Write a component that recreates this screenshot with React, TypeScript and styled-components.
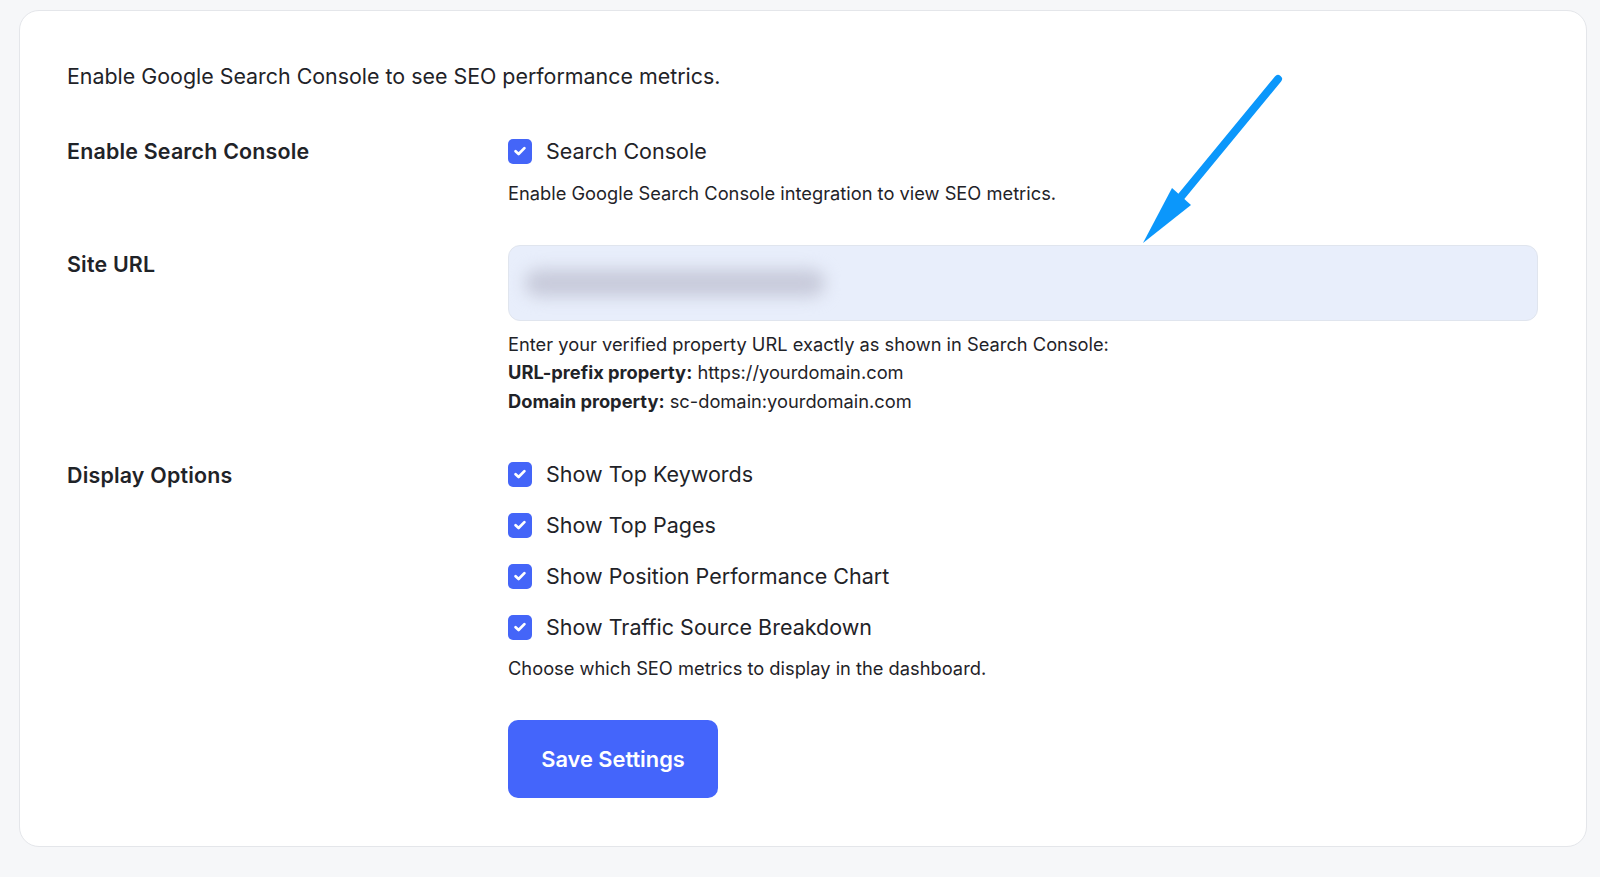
import React from 'react';
import styled, { createGlobalStyle } from 'styled-components';

const GlobalStyle = createGlobalStyle`
    html, body {
        margin: 0;
        padding: 0;
        background: #f6f7f9;
    }
    body {
        font-family: Inter, "Noto Sans", sans-serif;
        color: #1f2328;
    }
`;

const Page = styled.div`
    position: relative;
    padding: 10px 13px 30px 19px;
`;

const Card = styled.form`
    background: #fff;
    border: 1px solid #e4e6ea;
    border-radius: 20px;
    padding: 49px 48px 48px 47px;
`;

const Intro = styled.p`
    margin: 0 0 45px;
    font-size: 21.4px;
    line-height: 32px;
`;

const Table = styled.div`
    display: grid;
    grid-template-columns: 441px 1fr;
`;

const Label = styled.div<{ $offset?: number }>`
    font-size: 21.4px;
    font-weight: 600;
    letter-spacing: 0.2px;
    line-height: 28px;
    padding-top: ${p => p.$offset || 0}px;
`;

const Cell = styled.div<{ $top?: number; $bottom?: number }>`
    display: flex;
    flex-direction: column;
    padding-top: ${p => p.$top || 0}px;
    padding-bottom: ${p => p.$bottom || 0}px;
`;

const CheckList = styled.div`
    display: flex;
    flex-direction: column;
    gap: 23px;
`;

const CheckRow = styled.label`
    display: flex;
    align-items: center;
    gap: 14px;
    font-size: 21.5px;
    line-height: 28px;
`;

const Box = styled.span`
    width: 24px;
    height: 25px;
    border-radius: 5px;
    background: #4465f8;
    display: flex;
    align-items: center;
    justify-content: center;
    flex-shrink: 0;
`;

const Help = styled.p<{ $gap?: number }>`
    margin: ${p => p.$gap || 14}px 0 0;
    font-size: 18.3px;
    line-height: 28.5px;
    b {
        font-weight: 700;
    }
`;

const Field = styled.div`
    height: 76px;
    box-sizing: border-box;
    border: 1px solid #e0e5ee;
    border-radius: 12px;
    background: #e8eefb;
    display: flex;
    align-items: center;
    padding-left: 16px;
    overflow: hidden;
`;

// the stored site address is shown smudged out
const Smudge = styled.span`
    display: block;
    width: 300px;
    height: 28px;
    border-radius: 14px;
    background: #c8cbdb;
    filter: blur(8px);
`;

const SaveButton = styled.button`
    margin-top: 37px;
    align-self: flex-start;
    width: 210px;
    height: 78px;
    border: none;
    border-radius: 10px;
    background: #4465fb;
    color: #fff;
    font-family: Inter, sans-serif;
    font-size: 21.8px;
    font-weight: 600;
    cursor: pointer;
`;

const Pointer = styled.svg`
    position: absolute;
    left: 1130px;
    top: 66px;
    pointer-events: none;
`;

function Check({ children }: { children: React.ReactNode }) {
    return (
        <CheckRow>
            <Box>
                <svg width="12" height="10" viewBox="0 0 12 10">
                    <path d="M1.6 5.2 4.6 8 10.4 2.1" fill="none" stroke="#fff" strokeWidth="2.7" strokeLinecap="round" strokeLinejoin="round" />
                </svg>
            </Box>
            {children}
        </CheckRow>
    );
}

const options = [
    'Show Top Keywords',
    'Show Top Pages',
    'Show Position Performance Chart',
    'Show Traffic Source Breakdown',
];

function App() {
    return (
        <Page>
            <GlobalStyle />
            <Card onSubmit={e => e.preventDefault()}>
                <Intro>Enable Google Search Console to see SEO performance metrics.</Intro>
                <Table>
                    <Label>Enable Search Console</Label>
                    <Cell $bottom={37}>
                        <Check>Search Console</Check>
                        <Help>Enable Google Search Console integration to view SEO metrics.</Help>
                    </Cell>

                    <Label $offset={5}>Site URL</Label>
                    <Cell $bottom={45}>
                        <Field><Smudge /></Field>
                        <Help $gap={9}>
                            Enter your verified property URL exactly as shown in Search Console:<br />
                            <b>URL-prefix property:</b> https://yourdomain.com<br />
                            <b>Domain property:</b> sc-domain:yourdomain.com
                        </Help>
                    </Cell>

                    <Label $offset={1}>Display Options</Label>
                    <Cell>
                        <CheckList>
                            {options.map(o => <Check key={o}>{o}</Check>)}
                        </CheckList>
                        <Help $gap={13}>Choose which SEO metrics to display in the dashboard.</Help>
                        <SaveButton type="submit">Save Settings</SaveButton>
                    </Cell>
                </Table>
            </Card>
            <Pointer width="160" height="190" viewBox="1130 66 160 190">
                <line x1="1278" y1="79" x2="1180" y2="198" stroke="#0b97fb" strokeWidth="8" strokeLinecap="round" />
                <polygon points="1143,243 1172,188 1191,205" fill="#0b97fb" />
            </Pointer>
        </Page>
    );
}

export default App;
